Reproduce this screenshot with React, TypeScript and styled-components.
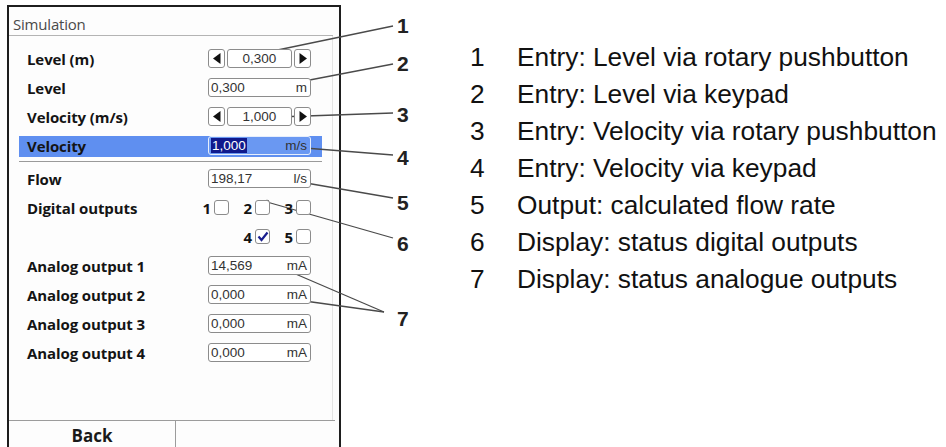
import * as React from 'react';
import styled, { createGlobalStyle } from 'styled-components';

const GlobalStyle = createGlobalStyle`
  html, body {
    margin: 0;
    padding: 0;
    background: #ffffff;
    overflow: hidden;
  }
  #root {
    width: 946px;
    height: 447px;
  }
`;

const Page = styled.div`
  position: relative;
  width: 946px;
  height: 447px;
  display: flex;
  align-items: flex-start;
`;

const Screen = styled.div`
  margin: 5px 0 0 7px;
  width: 330px;
  height: 442px;
  border: 2px solid #1e1e1e;
  border-bottom: none;
  background: #fdfdfd;
  display: flex;
  flex-direction: column;
  font-family: 'Open Sans', 'Noto Sans', sans-serif;
`;

const Header = styled.div`
  height: 28px;
  margin: 0 6px 0 0;
  padding-left: 4px;
  border-bottom: 1px solid #b4b4b4;
  display: flex;
  align-items: flex-end;
  font-size: 15px;
  color: #4a4a4a;
  line-height: 21px;
  letter-spacing: -0.2px;
`;

const Content = styled.div`
  flex: 1;
  padding-top: 8px;
  margin-right: 6px;
  border-right: 1px solid #e4e4e4;
  display: flex;
  flex-direction: column;
`;

const Row = styled.div<{ $active?: boolean }>`
  height: 29px;
  margin: 0 10px;
  padding: 0 11px 0 8px;
  display: flex;
  align-items: center;
  justify-content: space-between;
  box-sizing: border-box;
  position: relative;
  &::before {
    content: '';
    position: absolute;
    left: 0;
    right: 0;
    top: 5px;
    bottom: 3px;
    background: ${p => (p.$active ? '#5f8ff0' : 'transparent')};
    z-index: 0;
  }
  > * {
    position: relative;
    z-index: 1;
  }
`;

const Label = styled.span`
  font-size: 15px;
  font-weight: 700;
  color: #141414;
  letter-spacing: -0.1px;
`;

const Divider = styled.div`
  height: 1px;
  margin: 1px 10px 2px;
  background: #9a9a9a;
`;

const Field = styled.div<{ $active?: boolean }>`
  width: 103px;
  height: 19px;
  box-sizing: border-box;
  border: 1px solid ${p => (p.$active ? '#e6eefc' : '#8c8c8c')};
  border-radius: 3px;
  background: ${p => (p.$active ? '#6a98f2' : '#ffffff')};
  display: flex;
  align-items: center;
  justify-content: space-between;
  padding: 0 3px 0 2px;
  font-family: 'Liberation Sans', Arial, sans-serif;
  font-size: 13.5px;
  color: #333;
`;

const Selected = styled.span`
  background: #101a8c;
  color: #ffffff;
  padding: 0 1px;
  line-height: 15px;
`;

const Unit = styled.span`
  color: #333;
`;

const Spinner = styled.div`
  width: 103px;
  height: 19px;
  display: flex;
  gap: 2px;
  font-family: 'Liberation Sans', Arial, sans-serif;
  font-size: 13.5px;
  color: #333;
`;

const SpinButton = styled.div`
  width: 17px;
  box-sizing: border-box;
  border: 1px solid #8c8c8c;
  border-radius: 3px;
  background: #fff;
  display: flex;
  align-items: center;
  justify-content: center;
`;

const SpinValue = styled.div`
  flex: 1;
  box-sizing: border-box;
  border: 1px solid #8c8c8c;
  border-radius: 3px;
  background: #fff;
  display: flex;
  align-items: center;
  justify-content: center;
`;

const Boxes = styled.div`
  display: grid;
  grid-template-columns: repeat(3, 30px);
  column-gap: 11px;
`;

const BoxItem = styled.div<{ $col: number }>`
  grid-column: ${p => p.$col};
  display: flex;
  align-items: center;
  justify-content: flex-end;
  gap: 3px;
`;

const BoxNum = styled.span`
  font-size: 15px;
  font-weight: 700;
  color: #141414;
`;

const Check = styled.div`
  width: 15px;
  height: 15px;
  box-sizing: border-box;
  border: 1px solid #8c8c8c;
  border-radius: 3px;
  background: #fff;
  display: flex;
  align-items: center;
  justify-content: center;
`;

const Footer = styled.div`
  height: 28px;
  margin-right: 4px;
  border-top: 1px solid #9c9c9c;
  display: flex;
`;

const SoftKey = styled.div<{ $wide?: boolean }>`
  width: ${p => (p.$wide ? 'auto' : '166px')};
  flex: ${p => (p.$wide ? 1 : 'none')};
  border-right: ${p => (p.$wide ? 'none' : '1px solid #9c9c9c')};
  display: flex;
  align-items: center;
  justify-content: center;
  font-size: 17px;
  font-weight: 700;
  color: #1a1a1a;
`;

const Legend = styled.ol`
  list-style: none;
  margin: 39px 0 0 129px;
  padding: 0;
  font-family: 'Liberation Sans', Arial, sans-serif;
  font-size: 26.3px;
  line-height: 37px;
  color: #111;
`;

const LegendItem = styled.li`
  display: grid;
  grid-template-columns: 47px auto;
  white-space: nowrap;
`;

const Overlay = styled.svg`
  position: absolute;
  left: 0;
  top: 0;
  pointer-events: none;
`;

const Arrow = ({ dir }: { dir: 'left' | 'right' }) => (
  <svg width="8" height="11" viewBox="0 0 8 11">
    {dir === 'left' ? <path d="M7.5 0 L7.5 11 L0 5.5 Z" fill="#111" /> : <path d="M0.5 0 L0.5 11 L8 5.5 Z" fill="#111" />}
  </svg>
);

const Tick = () => (
  <svg width="12" height="11" viewBox="0 0 12 11">
    <path d="M1.5 5.5 L4.5 9 L10.5 1.5" fill="none" stroke="#1a1f8f" strokeWidth="2.2" />
  </svg>
);

const analog = ['14,569', '0,000', '0,000', '0,000'];

const legend = [
  'Entry: Level via rotary pushbutton',
  'Entry: Level via keypad',
  'Entry: Velocity via rotary pushbutton',
  'Entry: Velocity via keypad',
  'Output: calculated flow rate',
  'Display: status digital outputs',
  'Display: status analogue outputs',
];

// callout number position and the point it points at
const callouts: { n: string; y: number; lines: [number, number, number, number][] }[] = [
  { n: '1', y: 25, lines: [[393, 26, 268, 52]] },
  { n: '2', y: 63, lines: [[393, 64, 268, 88]] },
  { n: '3', y: 114, lines: [[393, 113, 277, 117]] },
  { n: '4', y: 157, lines: [[393, 155, 267, 145]] },
  { n: '5', y: 202, lines: [[393, 198, 277, 178]] },
  { n: '6', y: 243, lines: [[393, 238, 267, 202]] },
  {
    n: '7',
    y: 318,
    lines: [
      [384, 312, 277, 266],
      [384, 312, 283, 298],
    ],
  },
];

export default function App() {
  return (
    <Page>
      <GlobalStyle />
      <Screen>
        <Header>Simulation</Header>
        <Content>
          <Row>
            <Label>Level (m)</Label>
            <Spinner>
              <SpinButton>
                <Arrow dir="left" />
              </SpinButton>
              <SpinValue>0,300</SpinValue>
              <SpinButton>
                <Arrow dir="right" />
              </SpinButton>
            </Spinner>
          </Row>
          <Row>
            <Label>Level</Label>
            <Field>
              <span>0,300</span>
              <Unit>m</Unit>
            </Field>
          </Row>
          <Row>
            <Label>Velocity (m/s)</Label>
            <Spinner>
              <SpinButton>
                <Arrow dir="left" />
              </SpinButton>
              <SpinValue>1,000</SpinValue>
              <SpinButton>
                <Arrow dir="right" />
              </SpinButton>
            </Spinner>
          </Row>
          <Row $active>
            <Label>Velocity</Label>
            <Field $active>
              <Selected>1,000</Selected>
              <Unit>m/s</Unit>
            </Field>
          </Row>
          <Divider />
          <Row>
            <Label>Flow</Label>
            <Field>
              <span>198,17</span>
              <Unit>l/s</Unit>
            </Field>
          </Row>
          <Row>
            <Label>Digital outputs</Label>
            <Boxes>
              <BoxItem $col={1}>
                <BoxNum>1</BoxNum>
                <Check />
              </BoxItem>
              <BoxItem $col={2}>
                <BoxNum>2</BoxNum>
                <Check />
              </BoxItem>
              <BoxItem $col={3}>
                <BoxNum>3</BoxNum>
                <Check />
              </BoxItem>
            </Boxes>
          </Row>
          <Row>
            <span />
            <Boxes>
              <BoxItem $col={2}>
                <BoxNum>4</BoxNum>
                <Check>
                  <Tick />
                </Check>
              </BoxItem>
              <BoxItem $col={3}>
                <BoxNum>5</BoxNum>
                <Check />
              </BoxItem>
            </Boxes>
          </Row>
          {analog.map((v, i) => (
            <Row key={i}>
              <Label>Analog output {i + 1}</Label>
              <Field>
                <span>{v}</span>
                <Unit>mA</Unit>
              </Field>
            </Row>
          ))}
        </Content>
        <Footer>
          <SoftKey>Back</SoftKey>
          <SoftKey $wide />
        </Footer>
      </Screen>

      <Legend>
        {legend.map((t, i) => (
          <LegendItem key={i}>
            <span>{i + 1}</span>
            <span>{t}</span>
          </LegendItem>
        ))}
      </Legend>

      <Overlay width="946" height="447" viewBox="0 0 946 447">
        {callouts.map(c => (
          <g key={c.n}>
            {c.lines.map(([x1, y1, x2, y2], k) => (
              <g key={k}>
                <line x1={x1} y1={y1} x2={x2} y2={y2} stroke="#4a4a4a" strokeWidth="1.3" />
                <circle cx={x2} cy={y2} r="2.3" fill="#222" />
              </g>
            ))}
            <text
              x="397"
              y={c.y + 7.5}
              fontFamily="'Liberation Sans', Arial, sans-serif"
              fontWeight="700"
              fontSize="21"
              fill="#222"
            >
              {c.n}
            </text>
          </g>
        ))}
      </Overlay>
    </Page>
  );
}
